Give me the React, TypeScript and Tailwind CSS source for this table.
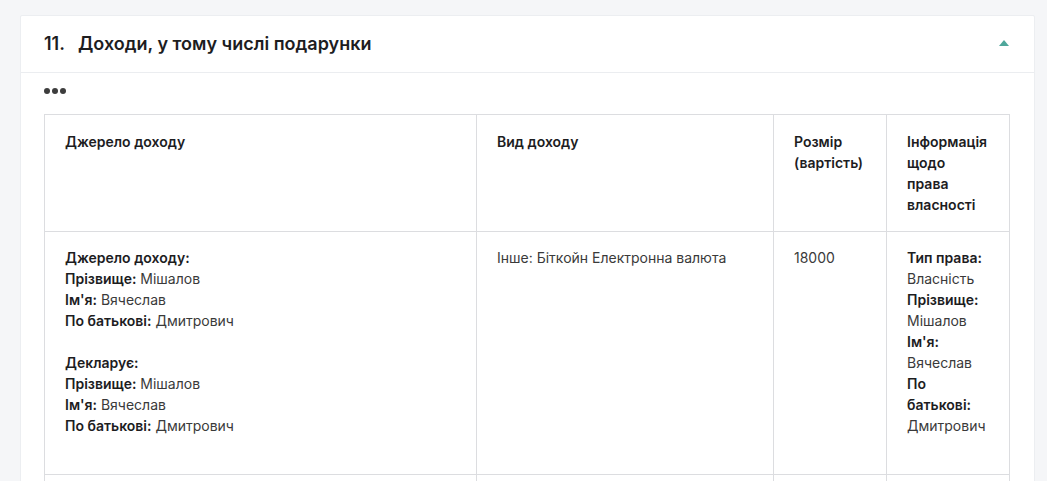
import React from "react";

const Lbl = ({ children }: { children: React.ReactNode }) => (
  <span className="font-semibold text-[#1d1d1f]">{children}</span>
);

export default function App() {
  return (
    <div
      className="min-h-screen bg-[#f5f6f8] pt-[15px] pl-[20px] pr-[12px] text-[14px] leading-[21px] text-[#3a3a3a]"
      style={{ fontFamily: "Inter, 'Noto Sans', sans-serif" }}
    >
      <div className="bg-white border border-[#eceef1] rounded-[2px]">
        <div className="flex items-center justify-between h-[57px] pb-[2px] px-[23px] border-b border-[#ebedf0]">
          <div className="flex items-center text-[18px] font-semibold text-[#1d1d1f]">
            <span className="w-[34px]">11.</span>
            <span>Доходи, у тому числі подарунки</span>
          </div>
          <svg width="10" height="6" viewBox="0 0 10 6" className="mr-[2px]">
            <polygon points="5,0 10,6 0,6" fill="#4fa79b" />
          </svg>
        </div>
        <div className="px-[23px] pb-[24px]">
          <div className="flex gap-[2px] h-[41px] items-start pt-[15px]">
            <span className="w-[6px] h-[6px] rounded-full bg-[#3d3d3d]" />
            <span className="w-[6px] h-[6px] rounded-full bg-[#3d3d3d]" />
            <span className="w-[6px] h-[6px] rounded-full bg-[#3d3d3d]" />
          </div>
          <table className="w-[965px] border-collapse table-fixed">
            <colgroup>
              <col className="w-[432px]" />
              <col className="w-[297px]" />
              <col className="w-[113px]" />
              <col className="w-[123px]" />
            </colgroup>
            <thead>
              <tr className="align-top">
                <th className="border border-[#dcdde0] px-[20px] pt-[16px] pb-[16px] text-left font-semibold text-[#1d1d1f]">Джерело доходу</th>
                <th className="border border-[#dcdde0] px-[20px] pt-[16px] pb-[16px] text-left font-semibold text-[#1d1d1f]">Вид доходу</th>
                <th className="border border-[#dcdde0] px-[20px] pt-[16px] pb-[16px] text-left font-semibold text-[#1d1d1f]">Розмір (вартість)</th>
                <th className="border border-[#dcdde0] px-[20px] pt-[16px] pb-[16px] text-left font-semibold text-[#1d1d1f]">Інформація щодо права власності</th>
              </tr>
            </thead>
            <tbody>
              <tr className="align-top">
                <td className="border border-[#dcdde0] px-[20px] pt-[15px] pb-[38px]">
                  <Lbl>Джерело доходу:</Lbl>
                  <br />
                  <Lbl>Прізвище:</Lbl> Мішалов
                  <br />
                  <Lbl>Ім'я:</Lbl> Вячеслав
                  <br />
                  <Lbl>По батькові:</Lbl> Дмитрович
                  <br />
                  <br />
                  <Lbl>Декларує:</Lbl>
                  <br />
                  <Lbl>Прізвище:</Lbl> Мішалов
                  <br />
                  <Lbl>Ім'я:</Lbl> Вячеслав
                  <br />
                  <Lbl>По батькові:</Lbl> Дмитрович
                </td>
                <td className="border border-[#dcdde0] px-[20px] pt-[15px]">Інше: Біткойн Електронна валюта</td>
                <td className="border border-[#dcdde0] px-[20px] pt-[15px]">18000</td>
                <td className="border border-[#dcdde0] px-[20px] pt-[15px]">
                  <Lbl>Тип права:</Lbl> Власність
                  <br />
                  <Lbl>Прізвище:</Lbl> Мішалов
                  <br />
                  <Lbl>Ім'я:</Lbl> Вячеслав
                  <br />
                  <Lbl>По батькові:</Lbl> Дмитрович
                </td>
              </tr>
              <tr>
                <td className="border border-[#dcdde0] h-[40px]" />
                <td className="border border-[#dcdde0] h-[40px]" />
                <td className="border border-[#dcdde0] h-[40px]" />
                <td className="border border-[#dcdde0] h-[40px]" />
              </tr>
            </tbody>
          </table>
        </div>
      </div>
    </div>
  );
}
